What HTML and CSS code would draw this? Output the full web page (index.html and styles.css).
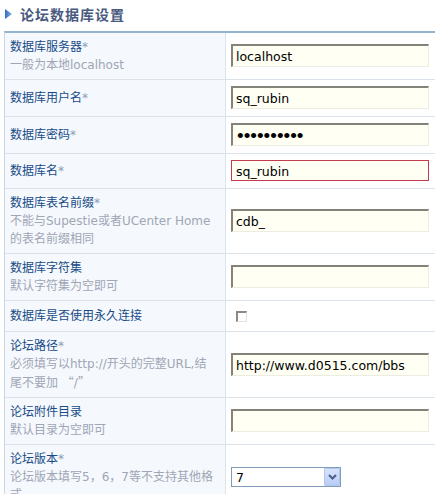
FILE: index.html
```html
<!DOCTYPE html>
<html lang="zh-CN">
<head>
<meta charset="utf-8">
<title>论坛数据库设置</title>
<link rel="stylesheet" href="styles.css">
</head>
<body>
<div class="panel">
  <h3 class="title">
    <svg class="tri" width="7" height="10" viewBox="0 0 7 10" aria-hidden="true">
      <defs>
        <linearGradient id="tg" x1="0" y1="0" x2="1" y2="0">
          <stop offset="0" stop-color="#2f6cc0"/>
          <stop offset="1" stop-color="#7fb0ea"/>
        </linearGradient>
      </defs>
      <polygon points="0,0 7,5 0,10" fill="url(#tg)"/>
    </svg>
    <span>论坛数据库设置</span>
  </h3>
  <table class="form">
    <colgroup><col class="c-lbl"><col class="c-fld"></colgroup>
    <tr>
      <th class="lbl">数据库服务器<em class="req">*</em><span class="hint">一般为本地localhost</span></th>
      <td class="fld"><input class="txt" type="text" value="localhost"></td>
    </tr>
    <tr>
      <th class="lbl">数据库用户名<em class="req">*</em></th>
      <td class="fld"><input class="txt" type="text" value="sq_rubin"></td>
    </tr>
    <tr>
      <th class="lbl">数据库密码<em class="req">*</em></th>
      <td class="fld"><input class="txt pwd" type="password" value="sq_rubin12"></td>
    </tr>
    <tr>
      <th class="lbl">数据库名<em class="req">*</em></th>
      <td class="fld"><input class="txt err" type="text" value="sq_rubin"></td>
    </tr>
    <tr>
      <th class="lbl">数据库表名前缀<em class="req">*</em><span class="hint">不能与Supestie或者UCenter Home<br>的表名前缀相同</span></th>
      <td class="fld"><input class="txt" type="text" value="cdb_"></td>
    </tr>
    <tr>
      <th class="lbl">数据库字符集<span class="hint">默认字符集为空即可</span></th>
      <td class="fld"><input class="txt" type="text" value=""></td>
    </tr>
    <tr>
      <th class="lbl">数据库是否使用永久连接</th>
      <td class="fld"><input class="chk" type="checkbox"></td>
    </tr>
    <tr>
      <th class="lbl">论坛路径<em class="req">*</em><span class="hint">必须填写以http://开头的完整URL,结<br>尾不要加 <span class="cjk">“</span>/<span class="cjk">”</span></span></th>
      <td class="fld"><input class="txt" type="text" value="http://www.d0515.com/bbs"></td>
    </tr>
    <tr>
      <th class="lbl">论坛附件目录<span class="hint">默认目录为空即可</span></th>
      <td class="fld"><input class="txt" type="text" value=""></td>
    </tr>
    <tr>
      <th class="lbl">论坛版本<em class="req">*</em><span class="hint">论坛版本填写5，6，7等不支持其他格<br>式</span></th>
      <td class="fld">
        <span class="sel">
          <select class="ver">
            <option>5</option>
            <option>6</option>
            <option selected>7</option>
          </select>
          <span class="sel-btn" aria-hidden="true">
            <svg width="9" height="6" viewBox="0 0 9 6"><polyline points="1,1 4.5,4.5 8,1" fill="none" stroke="#4b5f86" stroke-width="2"/></svg>
          </span>
        </span>
      </td>
    </tr>
  </table>
</div>
</body>
</html>
```

FILE: styles.css
```css
html, body {
  margin: 0;
  padding: 0;
  background: #ffffff;
}

body {
  font-family: "DejaVu Sans", "Noto Sans CJK SC", sans-serif;
  font-size: 12px;
  overflow: hidden;
}

.panel {
  padding-left: 4px;
}

.title {
  margin: 0;
  height: 31px;
  box-sizing: border-box;
  padding: 5px 0 8px 1px;
  display: flex;
  align-items: center;
  gap: 8px;
  font-family: "Noto Sans CJK SC", sans-serif;
  font-size: 14px;
  line-height: 18px;
  font-weight: bold;
  letter-spacing: 1px;
  color: #4a5a7e;
}

.tri {
  display: block;
  flex: none;
}

.form {
  width: 431px;
  table-layout: fixed;
  border-collapse: separate;
  border-spacing: 0;
  border-top: 2px solid #94b4cc;
  border-left: 1px solid #c9d7e4;
}

.c-lbl { width: 221px; }
.c-fld { width: 209px; }

.lbl {
  box-sizing: border-box;
  text-align: left;
  font-weight: normal;
  vertical-align: middle;
  padding: 5px 6px 5px 5px;
  line-height: 18px;
  color: #174c88;
  background: #f5f8fc;
  border-right: 1px solid #dbe3ec;
  border-bottom: 1px solid #dce2e9;
}

.req {
  font-style: normal;
  color: #8a9bb6;
}

.hint {
  display: block;
  color: #9fa6b6;
}

.cjk {
  font-family: "Noto Sans CJK SC", sans-serif;
  font-feature-settings: "fwid";
}

.fld {
  vertical-align: middle;
  padding: 5px 6px 5px 5px;
  background: #ffffff;
  border-bottom: 1px solid #dce2e9;
}

.txt {
  display: block;
  box-sizing: border-box;
  width: 198px;
  height: 23px;
  margin: 1px 0 2px;
  padding: 1px 2px 0 3px;
  font-family: "DejaVu Sans", sans-serif;
  font-size: 12.5px;
  color: #000000;
  background: #fffff3;
  border-style: solid;
  border-width: 2px 1px 1px 2px;
  border-color: #83837a #ecece2 #ecece2 #83837a;
  border-radius: 0;
  outline: none;
}

.txt.err {
  height: 21px;
  border: 1px solid #c43b50;
  padding-left: 4px;
}

.txt.pwd {
  font-family: "Liberation Sans", sans-serif;
  font-size: 19px;
  padding-left: 4px;
}

.chk {
  display: block;
  appearance: none;
  -webkit-appearance: none;
  box-sizing: border-box;
  width: 11px;
  height: 11px;
  margin: 5px 0 4px 5px;
  background: #ffffff;
  border-style: solid;
  border-width: 2px 1px 1px 2px;
  border-color: #8a8a80 #e4e4dc #e4e4dc #8a8a80;
  border-radius: 0;
}

.sel {
  position: relative;
  display: block;
  width: 110px;
  height: 20px;
}

.ver {
  appearance: none;
  -webkit-appearance: none;
  display: block;
  box-sizing: border-box;
  width: 110px;
  height: 20px;
  margin: 0;
  padding: 0 0 0 4px;
  font-family: "DejaVu Sans", sans-serif;
  font-size: 12.5px;
  color: #000000;
  background: #ffffff;
  border: 1px solid #7f9db9;
  border-radius: 0;
}

.sel-btn {
  position: absolute;
  top: 1px;
  right: 1px;
  width: 16px;
  height: 18px;
  box-sizing: border-box;
  display: flex;
  align-items: center;
  justify-content: center;
  background: linear-gradient(#d6e2fb, #b9cdf4);
  border: 1px solid #b2c6ee;
  border-radius: 1px;
  pointer-events: none;
}

.sel-btn svg {
  display: block;
}
```
